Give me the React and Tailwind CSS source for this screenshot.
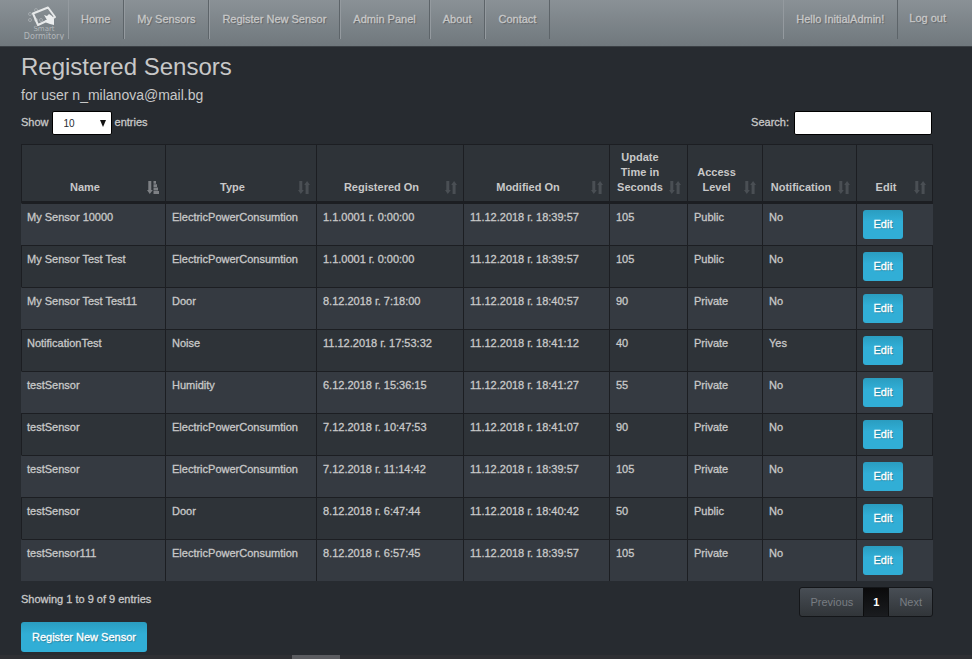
import React from "react";

const navLinks = ["Home", "My Sensors", "Register New Sensor", "Admin Panel", "About", "Contact"];

const columns = [
  { label: "Name", width: "w-[144px]", sorted: true },
  { label: "Type", width: "w-[151px]" },
  { label: "Registered On", width: "w-[147px]" },
  { label: "Modified On", width: "w-[146px]" },
  { label: "Update Time in Seconds", width: "w-[78px]" },
  { label: "Access Level", width: "w-[75px]" },
  { label: "Notification", width: "w-[94px]" },
  { label: "Edit", width: "w-[77px]" },
];

const rows = [
  ["My Sensor 10000", "ElectricPowerConsumtion", "1.1.0001 г. 0:00:00", "11.12.2018 г. 18:39:57", "105", "Public", "No"],
  ["My Sensor Test Test", "ElectricPowerConsumtion", "1.1.0001 г. 0:00:00", "11.12.2018 г. 18:39:57", "105", "Public", "No"],
  ["My Sensor Test Test11", "Door", "8.12.2018 г. 7:18:00", "11.12.2018 г. 18:40:57", "90", "Private", "No"],
  ["NotificationTest", "Noise", "11.12.2018 г. 17:53:32", "11.12.2018 г. 18:41:12", "40", "Private", "Yes"],
  ["testSensor", "Humidity", "6.12.2018 г. 15:36:15", "11.12.2018 г. 18:41:27", "55", "Private", "No"],
  ["testSensor", "ElectricPowerConsumtion", "7.12.2018 г. 10:47:53", "11.12.2018 г. 18:41:07", "90", "Private", "No"],
  ["testSensor", "ElectricPowerConsumtion", "7.12.2018 г. 11:14:42", "11.12.2018 г. 18:39:57", "105", "Private", "No"],
  ["testSensor", "Door", "8.12.2018 г. 6:47:44", "11.12.2018 г. 18:40:42", "50", "Public", "No"],
  ["testSensor111", "ElectricPowerConsumtion", "8.12.2018 г. 6:57:45", "11.12.2018 г. 18:39:57", "105", "Private", "No"],
];

function Logo() {
  return (
    <svg width="46" height="40" viewBox="0 0 46 40" role="img" aria-label="Smart Dormitory">
      <g fill="none" stroke="#a3a9ad" strokeWidth="1">
        <circle cx="9" cy="14" r="1.500" />
        <circle cx="9" cy="20" r="1.500" />
        <circle cx="15" cy="10" r="1.500" />
        <circle cx="15" cy="20" r="1.500" />
        <circle cx="20" cy="20" r="1.500" />
      </g>
      <path d="M12 13.500 27 7.500 34 17 17 25Z" fill="none" stroke="#e6e8e9" strokeWidth="2" strokeLinejoin="round" />
      <path d="M23 15 26 16 28 14 31 16 33 19 33 25 29 24 25 22.500 24 20.500 26 20Z" fill="#eceeef" />
      <g fill="#b2b7ba" fontFamily="DejaVu Sans, sans-serif">
        <text x="23" y="31" fontSize="7" textAnchor="middle">Smart</text>
        <text x="23" y="39" fontSize="8" textAnchor="middle">Dormitory</text>
      </g>
    </svg>
  );
}

function SortIcon({ sorted }) {
  return (
    <svg width="12" height="13" viewBox="0 0 12 13" className={sorted ? "text-[#7d8084]" : "text-[#4a4f54]"} fill="currentColor" aria-hidden="true">
      <path d="M1.300 0h3v9h1.500L2.800 13 0 9h1.300z" />
      {sorted ? (
        <path d="M6.500 0h2.500v2.800H6.500zM6.500 3.300h3.500v2.800H6.500zM6.500 6.600h4.500v2.800H6.500zM6.500 10h5.500v3H6.500z" />
      ) : (
        <path d="M7.600 13h3V4H12L9.100 0 6.200 4h1.400z" />
      )}
    </svg>
  );
}

const navText = "[text-shadow:1px_1px_1px_rgba(0,0,0,0.3)]";
const navItem = "h-[39px] border-r border-l border-r-[#5d6469] border-l-[#949a9f]";
const navLink = "block pt-3 pr-[13px] pl-3";
const infoButton =
  "block rounded-[3px] bg-linear-to-b from-[#2a9dc0] via-[#31aed6] via-40% to-[#31aed6] text-center text-white [text-shadow:1px_1px_1px_rgba(0,0,0,0.3)]";

export default function App() {
  return (
    <div className="flex min-h-screen flex-col bg-[#272b30] font-['Liberation_Sans',Arial,sans-serif] text-[11px] leading-[15px] text-[#c8c8c8] [-webkit-text-stroke:0.3px]">
      <nav className="flex h-[47px] items-start border-b border-[#3b4045] bg-linear-to-b from-[#8a9196] to-[#70787d] pl-[21px]">
        <a href="#home" className="mr-px h-[40px] [-webkit-text-stroke:0px]">
          <Logo />
        </a>
        <ul className="flex">
          {navLinks.map((label) => (
            <li key={label} className={navItem}>
              <a href="#nav" className={`${navLink} ${navText}`}>{label}</a>
            </li>
          ))}
        </ul>
        <ul className="mr-[15px] ml-auto flex">
          <li className={navItem}>
            <a href="#account" className={`${navLink} ${navText}`}>Hello InitialAdmin!</a>
          </li>
          <li>
            <button type="button" className={`px-[11px] pt-[11px] ${navText}`}>Log out</button>
          </li>
        </ul>
      </nav>

      <main className="mr-[39px] ml-[21px] grow">
        <h1 className="pt-[5px] text-[24px] leading-[30px] [-webkit-text-stroke:0px]">Registered Sensors</h1>
        <h2 className="pt-[4px] text-[14px] leading-[18px] [-webkit-text-stroke:0px]">for user n_milanova@mail.bg</h2>

        <div className="mt-[7px] flex items-center justify-between">
          <div className="flex items-center gap-[3px]">
            <label htmlFor="length" className="pb-[2px]">Show</label>
            <span className="relative">
              <select id="length" className="block h-[24px] w-[60px] appearance-none rounded-[2px] border border-black bg-white pl-[11px] text-[10px] text-[#272b30] [-webkit-text-stroke:0px]">
                <option>10</option>
                <option>25</option>
                <option>50</option>
              </select>
              <svg className="pointer-events-none absolute top-[9px] right-[6px]" width="6" height="7" viewBox="0 0 6 7" aria-hidden="true">
                <path d="M0 0h6L3 7z" fill="#111" />
              </svg>
            </span>
            <label htmlFor="length" className="pb-[2px]">entries</label>
          </div>
          <div className="flex items-center gap-[5px] pr-px">
            <label htmlFor="search" className="pb-[2px]">Search:</label>
            <input id="search" type="search" className="h-[24px] w-[138px] rounded-[2px] border border-black bg-white px-2 text-[#272b30]" />
          </div>
        </div>

        <table className="mt-[9px] w-full table-fixed border-separate border-spacing-0 bg-[#2e3338]">
          <thead>
            <tr>
              {columns.map(({ label, width, sorted }) => (
                <th key={label} className={`${width} relative h-[59px] border-t border-b-2 border-l border-[#1c1e22] pt-[4px] pr-[23px] pb-[6px] pl-[6px] text-center align-bottom font-bold last:border-r [-webkit-text-stroke:0px]`}>
                  {label}
                  <span className="absolute right-[6px] bottom-[7px]">
                    <SortIcon sorted={sorted} />
                  </span>
                </th>
              ))}
            </tr>
          </thead>
          <tbody>
            {rows.map((row, i) => (
              <tr key={i} className="group odd:bg-[#353a41]">
                {row.map((cell, j) => (
                  <td key={j} className="border-t border-l border-[#1c1e22] pt-[6px] pl-[6px] align-top whitespace-nowrap group-odd:first:border-l-transparent first:pl-[5px]">{cell}</td>
                ))}
                <td className="h-[42px] border-t border-l border-[#1c1e22] pt-[6px] pl-[6px] align-top group-even:border-r">
                  <button type="button" className={`h-[29px] w-[40px] ${infoButton}`}>Edit</button>
                </td>
              </tr>
            ))}
          </tbody>
        </table>

        <div className="mt-[6px] flex items-start justify-between">
          <p className="pt-[5px]">Showing 1 to 9 of 9 entries</p>
          <div className="flex h-[30px] overflow-hidden rounded-[3px] border border-[#141619] bg-linear-to-b from-[#484e55] to-[#313539] text-[#787d82] [-webkit-text-stroke:0px]">
            <button type="button" className="px-[10px]">Previous</button>
            <button type="button" className="border-r border-l border-[#0c0d0e] bg-linear-to-b from-[#0a0a0b] to-[#1a1c1f] px-[9px] font-bold text-white">1</button>
            <button type="button" className="px-[10px]">Next</button>
          </div>
        </div>

        <button type="button" className={`mt-[5px] h-[30px] px-[11px] ${infoButton}`}>Register New Sensor</button>
      </main>

      <div className="flex h-[4px] bg-[#2e2f33]">
        <div className="ml-[30%] w-[5%] bg-[#5b5c60]" />
      </div>
    </div>
  );
}
